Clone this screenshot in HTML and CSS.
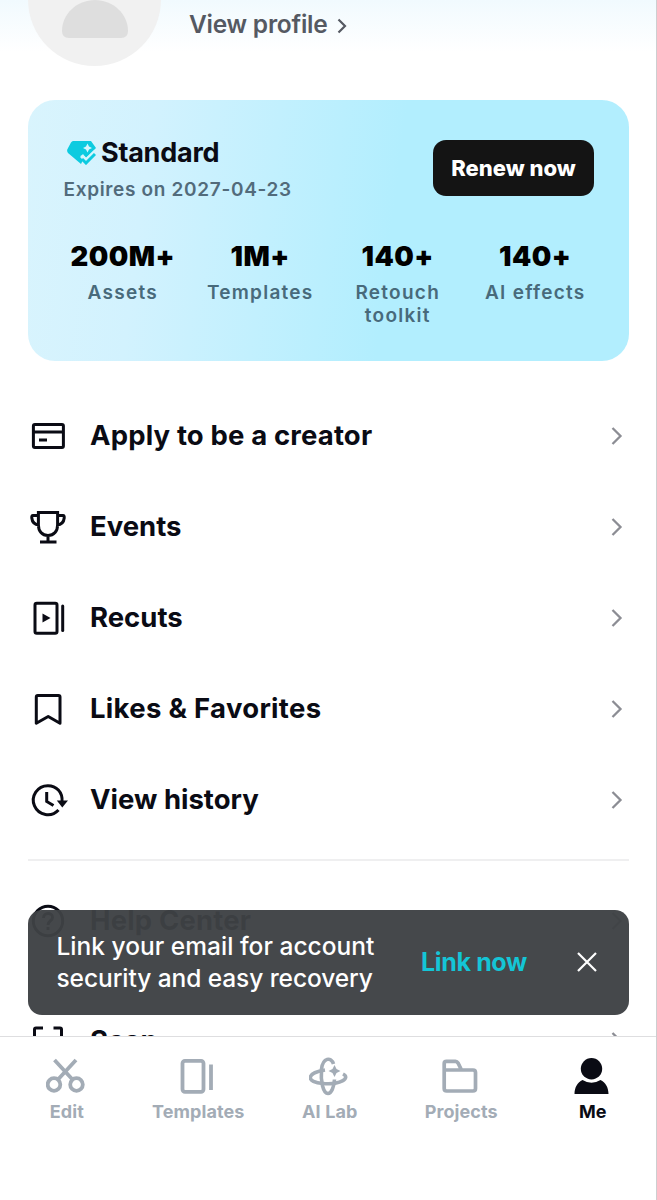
FILE: index.html
```html
<!DOCTYPE html>
<html lang="en">
<head>
<meta charset="utf-8">
<title>Me</title>
<link rel="stylesheet" href="styles.css">
</head>
<body>
<div class="app">
  <main class="content">
    <header class="profile">
      <div class="avatar">
        <svg width="133" height="133" viewBox="0 0 133 133"><path d="M67 67C49 67 34 81 34 98Q34 105 41 105H93Q100 105 100 98C100 81 85 67 67 67Z" fill="#dedede"/></svg>
      </div>
      <a class="view-profile"><span>View profile</span>
        <svg width="10" height="16" viewBox="0 0 10 16"><path d="M1.500 1.500L8 8L1.500 14.500" fill="none" stroke="#555962" stroke-width="2.200"/></svg>
      </a>
    </header>

    <section class="plan">
      <div class="plan-top">
        <div>
          <div class="plan-name">
            <svg width="29" height="24" viewBox="0 0 29 24"><path d="M6 0H24L29 7L26 10L19 17L16 13L13 16L16 19L14 23L1 12Q-.5 10 .5 8L4 1.500Q5 0 6 0Z" fill="#0dcbe0"/><path d="M20.500 2.500L22 5.500L25 7L22 8.500L20.500 11.500L19 8.500L16 7L19 5.500Z" fill="#d9f6fd"/><path d="M14 15.500Q16.500 14 19 18L28 9.500" fill="none" stroke="#d5f5fd" stroke-width="1.800"/><path d="M15 18L19 22L28 13" fill="none" stroke="#0dcbe0" stroke-width="3"/></svg>
            <span>Standard</span>
          </div>
          <div class="expires">Expires on 2027-04-23</div>
        </div>
        <button class="renew"><span>Renew now</span></button>
      </div>
      <div class="stats">
        <div class="stat"><b>200M+</b><span>Assets</span></div>
        <div class="stat"><b>1M+</b><span>Templates</span></div>
        <div class="stat"><b>140+</b><span>Retouch<br>toolkit</span></div>
        <div class="stat"><b>140+</b><span>AI effects</span></div>
      </div>
    </section>

    <div class="menu">
      <a class="row">
        <svg class="icon" viewBox="0 0 40 40"><g fill="none" stroke="#0a0b14" stroke-width="3"><rect x="5.400" y="8.400" width="30" height="23" rx="1.500"/><path d="M5 16H36M11 24H19"/></g></svg>
        <span class="wide">Apply to be a creator</span><svg class="chev" viewBox="0 0 12 20"><path d="M1.500 2L9.500 10L1.500 18"/></svg>
      </a>
      <a class="row">
        <svg class="icon" viewBox="0 0 40 40"><g fill="none" stroke="#0a0b14" stroke-width="3"><path d="M10.400 5.400H29.600V18C29.600 24 26 28.500 20 28.500S10.400 24 10.400 18ZM20 28.500V35M12 35H28.500M10 8.500H5Q3.500 8.500 3.800 11C4.200 15 6 17.500 11 18M30 8.500H35Q36.500 8.500 36.200 11C35.800 15 34 17.500 29 18"/></g></svg>
        <span>Events</span><svg class="chev" viewBox="0 0 12 20"><path d="M1.500 2L9.500 10L1.500 18"/></svg>
      </a>
      <a class="row">
        <svg class="icon" viewBox="0 0 40 40"><g fill="none" stroke="#0a0b14" stroke-width="3"><rect x="7" y="5.200" width="22" height="30" rx="1.800"/><path d="M34.700 8V32.500" stroke-linecap="round"/></g><path d="M14.500 15.500L22.500 20L14.500 24.500Z" fill="#0a0b14"/></svg>
        <span>Recuts</span><svg class="chev" viewBox="0 0 12 20"><path d="M1.500 2L9.500 10L1.500 18"/></svg>
      </a>
      <a class="row">
        <svg class="icon" viewBox="0 0 40 40"><path d="M8.300 34.300V8Q8.300 6.400 9.800 6.400H30.500Q32 6.400 32 8V34.300L20.200 27.500Z" fill="none" stroke="#0a0b14" stroke-width="3" stroke-linejoin="round"/></svg>
        <span class="wider">Likes &amp; Favorites</span><svg class="chev" viewBox="0 0 12 20"><path d="M1.500 2L9.500 10L1.500 18"/></svg>
      </a>
      <a class="row">
        <svg class="icon" viewBox="0 0 40 40"><path d="M34 22C35 12 28 5.700 20 5.700A14.500 14.500 0 1 0 30.500 30M18.700 12V21.500L25.500 25.500" fill="none" stroke="#0a0b14" stroke-width="3"/><path d="M28.800 20.500H40L34.300 27.500Z" fill="#0a0b14"/></svg>
        <span>View history</span><svg class="chev" viewBox="0 0 12 20"><path d="M1.500 2L9.500 10L1.500 18"/></svg>
      </a>
    </div>
    <div class="menu solo">
      <a class="row">
        <svg class="icon" viewBox="0 0 40 40"><g fill="none" stroke="#0a0b14" stroke-width="3"><circle cx="20" cy="20" r="14.700"/><path d="M15.500 17C15.500 11 24.500 11 24.500 16.500C24.500 20 20 19.500 20 24M20 26V29"/></g></svg>
        <span class="wide">Help Center</span><svg class="chev" viewBox="0 0 12 20"><path d="M1.500 2L9.500 10L1.500 18"/></svg>
      </a>
    </div>
    <div class="menu solo">
      <a class="row">
        <svg class="icon" viewBox="0 0 40 40"><path d="M6.500 15V8.500Q6.500 7 8 7H15M25.500 7H32Q33.500 7 33.500 8.500V15" fill="none" stroke="#0a0b14" stroke-width="3"/></svg>
        <span>Scan</span><svg class="chev" viewBox="0 0 12 20"><path d="M1.500 2L9.500 10L1.500 18"/></svg>
      </a>
    </div>
  </main>

  <nav class="tabs">
    <a class="tab"><svg viewBox="0 0 40 40"><g fill="none" stroke="#a3acb6" stroke-width="3.800"><circle cx="8" cy="28.500" r="6.300"/><circle cx="30.500" cy="28.500" r="6.300"/><path d="M8.500 4L26.500 23.500M30 4L12 23.500"/></g></svg><span>Edit</span></a>
    <a class="tab"><svg viewBox="0 0 40 40"><g fill="none" stroke="#a3acb6" stroke-width="3.800"><rect x="5.500" y="4.800" width="21" height="31" rx="2.500"/><path d="M34 8.500V34"/></g></svg><span>Templates</span></a>
    <a class="tab"><svg viewBox="0 0 40 40"><g fill="none" stroke="#a3acb6" stroke-width="3.600"><path d="M24.500 8C22 .5 14 1.500 12.500 13C11.500 25 14 37.500 19 37.500C22.500 37.500 25 31 25.500 23.500"/><path d="M16 14C-3.500 17 -3 26.500 14 27.500C31 29 42 22 34 18"/></g><path d="M25.500 9L27.500 13L31.500 15L27.500 17L25.500 21L23.500 17L19.500 15L23.500 13Z" fill="#a3acb6"/></svg><span>AI Lab</span></a>
    <a class="tab"><svg viewBox="0 0 40 40"><path d="M4.200 16V7.500Q4.200 5.300 6.500 5.300H15.500Q17 5.300 18 7L21.500 14H33Q35.500 14 35.500 16.500V32.500Q35.500 35 33 35H6.700Q4.200 35 4.200 32.500V14H22" fill="none" stroke="#a3acb6" stroke-width="3.700"/></svg><span>Projects</span></a>
    <a class="tab on"><svg viewBox="0 0 40 40"><circle cx="19.500" cy="12.800" r="10.700" fill="#0a0b14"/><path d="M10.500 24Q19.500 29.500 28.500 24C33.500 26.500 36.500 31.500 36.500 38H2.500C2.500 31.500 5.500 26.500 10.500 24Z" fill="#0a0b14"/></svg><span>Me</span></a>
  </nav>

  <aside class="toast">
    <p><span class="wide-line">Link your email for account</span><br>security and easy recovery</p>
    <a class="link">Link now</a>
    <svg class="close" width="22" height="22" viewBox="0 0 22 22"><path d="M2 2L20 20M20 2L2 20" stroke="#fff" stroke-width="2.200"/></svg>
  </aside>
</div>
</body>
</html>
```
FILE: styles.css
```css
* { box-sizing: border-box; }
body { margin: 0; background: #fff; color: #0a0b14; font-family: Inter, "Liberation Sans", sans-serif; }
.app { position: relative; width: 657px; height: 1200px; overflow: hidden; border-right: 1px solid #cdced0; }
.content { height: 1036px; overflow: hidden; padding: 0 27px 0 28px; background: linear-gradient(#f1fafe, #fff 52px); }
.profile { display: flex; height: 99.500px; gap: 28px; }
.avatar { width: 133px; height: 133px; margin-top: -67px; border-radius: 50%; background: #f1f1f1; flex: none; }
.avatar svg { display: block; }
.view-profile { display: flex; align-items: center; gap: 10px; height: 48px; color: #555962; font-size: 24.500px; font-weight: 600; letter-spacing: -.25px; }
.view-profile svg { margin-top: 3px; }
.plan { height: 261.500px; border-radius: 27px; padding: 36px 35px 0; background: linear-gradient(97deg, #d9f4fd, #d2f2fe 20%, #b2eefe 60%); }
.plan-top { display: flex; justify-content: space-between; height: 104px; }
.plan-name { display: flex; align-items: center; gap: 5.500px; padding-left: 3.500px; height: 34px; font-size: 27px; font-weight: 700; letter-spacing: -.25px; }
.expires { font-size: 19px; font-weight: 600; line-height: 24px; margin-top: 8px; padding-left: .5px; color: #526b7b; letter-spacing: .67px; white-space: nowrap; }
.renew { width: 161px; height: 56px; margin-top: 4px; border: 0; border-radius: 13px; background: #141414; color: #fff; font: 800 22px Inter, sans-serif; letter-spacing: 0; padding: 0; white-space: nowrap; }
.stats { display: grid; grid-template-columns: repeat(4, 137.500px); margin-left: -9px; }
.stat { text-align: center; display: flex; flex-direction: column; }
.stat b { font-size: 27.500px; line-height: 32px; font-weight: 900; color: #000; letter-spacing: .5px; }
.stat span { font-size: 19px; line-height: 23px; font-weight: 600; margin-top: 9px; color: #486a7b; letter-spacing: 1.250px; }
.menu { padding: 29px 0 13.500px; border-bottom: 2px solid #efeff0; }
.solo { padding: 14px 0 13px; }
.row { display: flex; align-items: center; height: 91.100px; font-size: 27.500px; font-weight: 700; letter-spacing: 0; }
.menu .row span { margin-top: -1px; }
.row .wide { letter-spacing: .15px; }
.row .wider { letter-spacing: .31px; }
.icon { width: 40px; height: 40px; flex: none; margin-right: 22px; }
.chev { width: 12px; height: 20px; margin-left: auto; margin-right: 6px; fill: none; stroke: #8c8d94; stroke-width: 2.300; }
.tabs { display: grid; grid-template-columns: repeat(5, 131.500px); height: 164px; padding-top: 19px; border-top: 1px solid #dedee0; background: #fff; }
.tab { display: flex; flex-direction: column; align-items: center; color: #a3acb6; font-size: 18px; line-height: 22px; font-weight: 650; letter-spacing: .1px; }
.tab svg { width: 40px; height: 40px; margin-bottom: 5px; }
.tab span { padding-left: 2px; }
.on { color: #0a0b14; }
.toast { position: absolute; left: 28px; top: 909.500px; width: 601px; height: 105px; border-radius: 14px; background: rgba(62, 65, 68, .965); display: flex; align-items: center; padding: 0 31px 0 28.500px; color: #fff; }
.toast p { margin: 0; width: 364.500px; font-size: 24.500px; line-height: 32px; font-weight: 550; letter-spacing: -.08px; white-space: nowrap; }
.wide-line { letter-spacing: .02px; }
.link { color: #14c5d6; font-size: 25px; font-weight: 650; letter-spacing: -.35px; white-space: nowrap; }
.close { margin-left: auto; }
```
